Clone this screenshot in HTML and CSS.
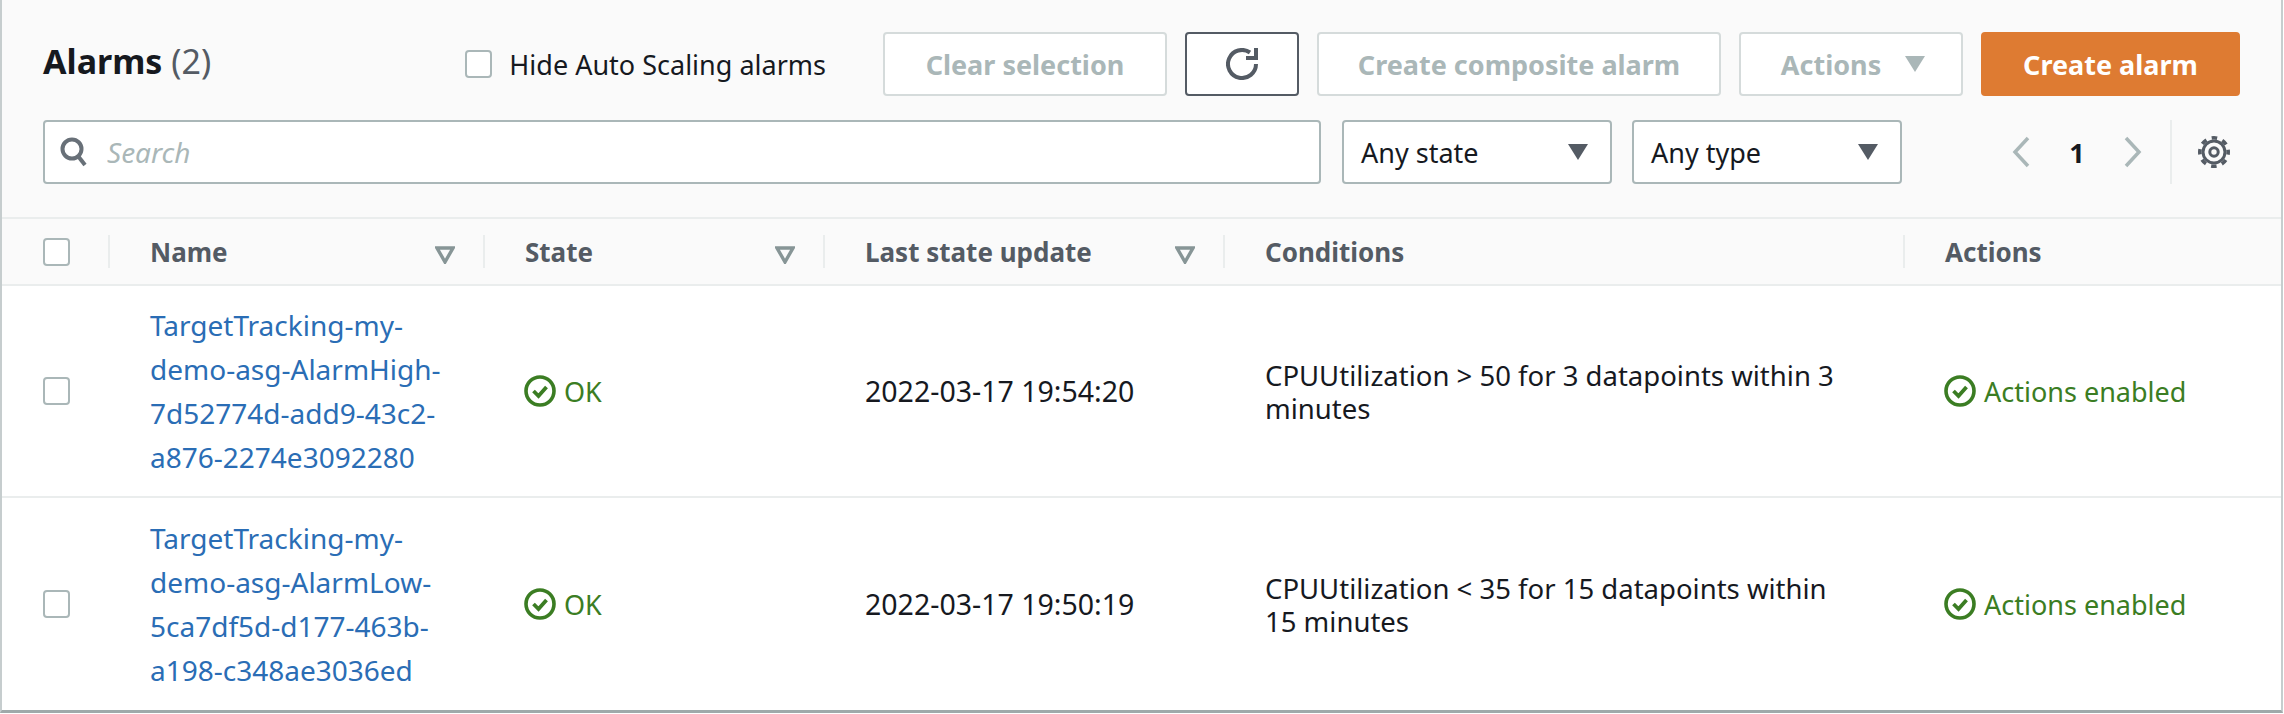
FILE: index.html
```html
<!DOCTYPE html>
<html>
	<head>
		<meta charset="utf-8">
		<title>Alarms</title>
		<meta name="viewport" content="width=device-width, initial-scale=1">
		<link rel="stylesheet" href="styles.css">
	</head>
	<body>
		<div class="panel">
			<div class="toolbar">
				<div class="toolbar-row">
					<h1 class="title">Alarms <span class="count">(2)</span></h1>
					<label class="hide-auto"><input class="check" type="checkbox">Hide Auto Scaling alarms</label>
					<div class="btn-group">
						<button class="btn btn-clear" type="button" disabled>Clear selection</button>
						<button class="btn btn-refresh" type="button" aria-label="Refresh">
							<svg class="ico-refresh" viewBox="0 0 32 32"><path d="M24 4.500A14 14 0 1 0 30 16" fill="none" stroke="#545b64" stroke-width="4"/><path d="M28 0h4v12H20V8h8z" fill="#545b64"/></svg>
						</button>
						<button class="btn btn-composite" type="button" disabled>Create composite alarm</button>
						<button class="btn btn-actions" type="button" disabled>Actions<svg class="caret" viewBox="0 0 20 20"><path d="M0 2h20L10 18z" fill="#aab7b8"/></svg></button>
						<button class="btn btn-primary" type="button">Create alarm</button>
					</div>
				</div>
				<div class="toolbar-row">
					<div class="search">
						<svg class="ico-search" viewBox="0 0 28 30"><circle cx="12" cy="12" r="9.5" fill="none" stroke="#687078" stroke-width="4"/><path d="M18 19l7 9" stroke="#687078" stroke-width="4" fill="none"/></svg>
						<input class="search-input" type="text" placeholder="Search">
					</div>
					<button class="select" type="button">Any state<svg class="caret" viewBox="0 0 20 20"><path d="M0 2h20L10 18z" fill="#545b64"/></svg></button>
					<button class="select select-type" type="button">Any type<svg class="caret" viewBox="0 0 20 20"><path d="M0 2h20L10 18z" fill="#545b64"/></svg></button>
					<div class="pager">
						<svg class="chevron" viewBox="0 0 20 32"><path d="M17 2L4 16l13 14" fill="none" stroke="#aab7b8" stroke-width="3.5"/></svg>
						<span class="page-num">1</span>
						<svg class="chevron" viewBox="0 0 20 32"><path d="M3 2l13 14L3 30" fill="none" stroke="#aab7b8" stroke-width="3.5"/></svg>
						<div class="pager-settings">
							<svg class="ico-gear" viewBox="0 0 32 32"><g fill="none" stroke="#545b64"><circle cx="16" cy="16" r="14.200" stroke-width="3.600" stroke-dasharray="5.570 5.580" stroke-dashoffset="2.780"/><circle cx="16" cy="16" r="11" stroke-width="3"/><circle cx="16" cy="16" r="4.200" stroke-width="3"/></g></svg>
						</div>
					</div>
				</div>
			</div>
			<div class="grid head">
				<div class="cell-check"><input class="check" type="checkbox"></div>
				<div class="th">Name<svg class="sort" viewBox="0 0 20 18"><path d="M2 2h16l-8 14z" fill="none" stroke="#879596" stroke-width="3.400"/></svg></div>
				<div class="th">State<svg class="sort" viewBox="0 0 20 18"><path d="M2 2h16l-8 14z" fill="none" stroke="#879596" stroke-width="3.400"/></svg></div>
				<div class="th">Last state update<svg class="sort" viewBox="0 0 20 18"><path d="M2 2h16l-8 14z" fill="none" stroke="#879596" stroke-width="3.400"/></svg></div>
				<div class="th">Conditions</div>
				<div class="th">Actions</div>
			</div>
			<div class="grid row">
				<div class="cell-check"><input class="check" type="checkbox"></div>
				<div class="td"><a class="link" href="#">TargetTracking-my-<br>demo-asg-AlarmHigh-<br>7d52774d-add9-43c2-<br>a876-2274e3092280</a></div>
				<div class="td"><span class="status"><svg class="ico-ok" viewBox="0 0 32 32"><circle cx="16" cy="16" r="14" fill="none" stroke="#3b7d23" stroke-width="3.600"/><path d="M9.500 16l5 5 8-9" fill="none" stroke="#3b7d23" stroke-width="3.800"/></svg>OK</span></div>
				<div class="td td-date">2022-03-17 19:54:20</div>
				<div class="td td-cond">CPUUtilization &gt; 50 for 3 datapoints within 3<br>minutes</div>
				<div class="td"><span class="status"><svg class="ico-ok" viewBox="0 0 32 32"><circle cx="16" cy="16" r="14" fill="none" stroke="#3b7d23" stroke-width="3.600"/><path d="M9.500 16l5 5 8-9" fill="none" stroke="#3b7d23" stroke-width="3.800"/></svg>Actions enabled</span></div>
			</div>
			<div class="grid row">
				<div class="cell-check"><input class="check" type="checkbox"></div>
				<div class="td"><a class="link" href="#">TargetTracking-my-<br>demo-asg-AlarmLow-<br>5ca7df5d-d177-463b-<br>a198-c348ae3036ed</a></div>
				<div class="td"><span class="status"><svg class="ico-ok" viewBox="0 0 32 32"><circle cx="16" cy="16" r="14" fill="none" stroke="#3b7d23" stroke-width="3.600"/><path d="M9.500 16l5 5 8-9" fill="none" stroke="#3b7d23" stroke-width="3.800"/></svg>OK</span></div>
				<div class="td td-date">2022-03-17 19:50:19</div>
				<div class="td td-cond">CPUUtilization &lt; 35 for 15 datapoints within<br>15 minutes</div>
				<div class="td"><span class="status"><svg class="ico-ok" viewBox="0 0 32 32"><circle cx="16" cy="16" r="14" fill="none" stroke="#3b7d23" stroke-width="3.600"/><path d="M9.500 16l5 5 8-9" fill="none" stroke="#3b7d23" stroke-width="3.800"/></svg>Actions enabled</span></div>
			</div>
		</div>
	</body>
</html>
```

FILE: styles.css
```css
html, body {
	margin: 0;
	background: #fff;
}
body {
	font-family: "Noto Sans", "Liberation Sans", sans-serif;
	font-size: 27px;
	color: #16191f;
}
.panel {
	box-sizing: border-box;
	width: 2283px;
	height: 713px;
	background: #fff;
	border-left: 2px solid #c6cdce;
	border-right: 2px solid #c6cdce;
	border-bottom: 3px solid #9fa9aa;
}

/* toolbar */
.toolbar {
	padding: 32px 41px 0;
	height: 185px;
	background: #fafafa;
	border-bottom: 2px solid #eaeded;
	display: flex;
	flex-direction: column;
	gap: 24px;
}
.toolbar-row {
	display: flex;
	align-items: center;
	height: 64px;
}
.title {
	margin: 0 0 5px;
	flex: 1;
	font-size: 34px;
	font-weight: 700;
	line-height: 59px;
}
.count {
	font-weight: 400;
	color: #545b64;
}
.hide-auto {
	display: flex;
	align-items: center;
	gap: 17px;
	margin-right: 57px;
}
.check {
	appearance: none;
	box-sizing: border-box;
	display: block;
	margin: 0;
	width: 27px;
	height: 28px;
	background: #fff;
	border: 2px solid #aab7b8;
	border-radius: 4px;
}
.btn-group {
	display: flex;
	gap: 18px;
}
.btn {
	box-sizing: border-box;
	height: 64px;
	padding: 0;
	font: 700 27px "Noto Sans", "Liberation Sans", sans-serif;
	background: #fff;
	border: 2px solid #d5dbdb;
	border-radius: 4px;
	color: #aab7b8;
	display: flex;
	align-items: center;
	justify-content: center;
}
.btn-clear { width: 284px; }
.btn-refresh {
	width: 114px;
	border-color: #545b64;
}
.btn-composite { width: 404px; }
.btn-actions {
	width: 224px;
	gap: 24px;
	padding-left: 4px;
}
.btn-primary {
	width: 259px;
	background: #de7b32;
	border-color: #de7b32;
	color: #fff;
}
.ico-refresh {
	width: 32px;
	height: 32px;
}
.caret {
	width: 20px;
	height: 20px;
}
.search {
	box-sizing: border-box;
	width: 1278px;
	height: 64px;
	display: flex;
	align-items: center;
	gap: 19px;
	padding-left: 15px;
	background: #fff;
	border: 2px solid #aab7b8;
	border-radius: 4px;
}
.ico-search {
	width: 28px;
	height: 30px;
	flex: none;
}
.search-input {
	flex: 1;
	border: 0;
	outline: 0;
	padding: 0;
	background: none;
	font: italic 28px "Noto Sans", "Liberation Sans", sans-serif;
}
.search-input::placeholder {
	color: #aab7b8;
}
.select {
	box-sizing: border-box;
	width: 270px;
	height: 64px;
	margin-left: 21px;
	padding: 0 22px 0 17px;
	display: flex;
	align-items: center;
	justify-content: space-between;
	font: 27px "Noto Sans", "Liberation Sans", sans-serif;
	color: #16191f;
	background: #fff;
	border: 2px solid #aab7b8;
	border-radius: 4px;
}
.select-type {
	margin-left: 20px;
}
.pager {
	flex: 1;
	display: flex;
	align-items: center;
	padding-left: 109px;
}
.chevron {
	width: 20px;
	height: 32px;
}
.page-num {
	width: 92px;
	text-align: center;
	font-weight: 700;
}
.pager-settings {
	margin-left: 27px;
	height: 64px;
	padding-left: 26px;
	display: flex;
	align-items: center;
	border-left: 2px solid #eaeded;
}
.ico-gear {
	width: 32px;
	height: 32px;
}

/* table */
.grid {
	display: grid;
	grid-template-columns: 106px 375px 340px 400px 680px 1fr;
	align-items: center;
}
.head {
	height: 65px;
	background: #fafafa;
	border-bottom: 2px solid #eaeded;
	font-size: 26px;
	font-weight: 700;
	color: #545b64;
}
.cell-check {
	padding-left: 41px;
}
.th {
	box-sizing: border-box;
	height: 33px;
	display: flex;
	align-items: center;
	padding: 0 28px 0 40px;
	border-left: 2px solid #eaeded;
}
.sort {
	margin-left: auto;
	margin-top: 6px;
	width: 20px;
	height: 18px;
}
.row {
	box-sizing: border-box;
	height: 212px;
	border-bottom: 2px solid #eaeded;
}
.row:last-child {
	border-bottom: 0;
}
.td {
	padding-left: 42px;
	line-height: 33px;
}
.td-date {
	font-size: 28.5px;
}
.td-cond {
	font-size: 27.5px;
	padding-top: 2px;
}
.link {
	display: block;
	font-size: 28px;
	line-height: 44px;
	color: #2a6db5;
	text-decoration: none;
}
.status {
	display: flex;
	align-items: center;
	gap: 8px;
	margin-left: -1px;
	color: #3b7d23;
}
.ico-ok {
	width: 32px;
	height: 32px;
	flex: none;
}
```
